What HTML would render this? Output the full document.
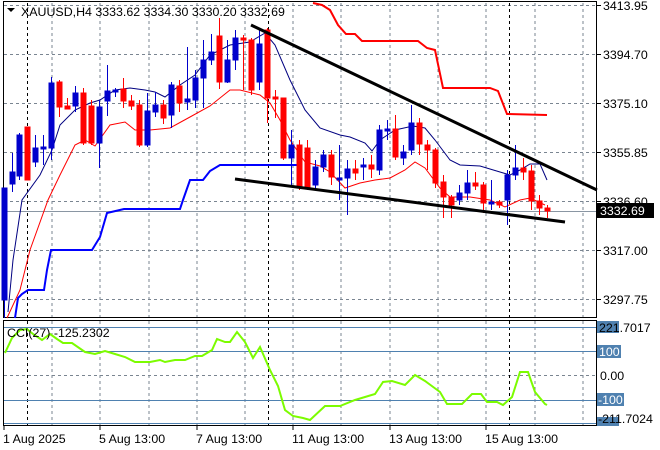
<!DOCTYPE html>
<html><head><style>
body{margin:0;background:#fff;width:660px;height:450px;overflow:hidden}
svg{display:block}
text{font-family:"Liberation Sans",sans-serif;font-size:12.4px;fill:#000}
</style></head><body>
<svg width="660" height="450" viewBox="0 0 660 450" xmlns="http://www.w3.org/2000/svg">
<rect width="660" height="450" fill="#fff"/>
<g stroke="#7a8591" stroke-width="1" stroke-dasharray="3,3" fill="none">
<path d="M52 3V317M100 3V317M149 3V317M197 3V317M245 3V317M293 3V317M341 3V317M390 3V317M438 3V317M486 3V317M535 3V317M583 3V317"/>
<path d="M52 321V425M100 321V425M149 321V425M197 321V425M245 321V425M293 321V425M341 321V425M390 321V425M438 321V425M486 321V425M535 321V425M583 321V425"/>
<path d="M4 5.5H597M4 54.5H597M4 103.5H597M4 152.5H597M4 201.5H597M4 250.5H597M4 299.5H597"/>
<path d="M4 375.5H597"/>
</g>
<g stroke="#000" stroke-dasharray="3,3"><path d="M27.5 3V317M268.5 3V317M509.5 3V317M27.5 321V425M268.5 321V425M509.5 321V425"/></g>
<path d="M4 211.5H597" stroke="#8a96a3"/>
<g stroke="#4f81b0"><path d="M4 327.5H597M4 351.5H597M4 400.5H597M4 423.5H597"/></g>
<rect x="3.5" y="1.5" width="593" height="316" fill="none" stroke="#000"/>
<rect x="3.5" y="320.5" width="593" height="105" fill="none" stroke="#000"/>
<polyline fill="none" stroke="#0000ff" stroke-width="2" points="15,318 18,298 22,294 28,290 44,290 47,270 51,250 92,250 100,237 107,213 124,209 180,209 183,200 190,180 203,180 210,171 220,165 300,165"/>
<polyline fill="none" stroke="#ff0000" stroke-width="2" points="313,3 322,5 330,10 338,25 346,34 355,34 362,41 418,41 427,48 435,50 443,88 490,88 498,91 507,114 547,115"/>
<polyline fill="none" stroke="#000080" stroke-width="1" points="8,312 13,260 22,200 40,175 52,150 60,125 75,110 90,103 100,100 115,90 130,88 145,90 155,92 165,97 180,85 195,75 210,55 230,45 250,42 265,33 275,45 290,80 305,110 320,128 340,135 350,137 365,143 372,151 380,140 395,130 413,126 425,128 435,140 450,160 460,165 480,166 500,172 510,175 520,170 530,164 540,164 547,180"/>
<polyline fill="none" stroke="#ff0000" stroke-width="1" points="7,318 20,290 30,250 48,200 60,175 75,145 85,140 95,146 110,125 125,122 135,130 150,130 170,128 190,117 210,106 230,90 240,90 260,95 270,103 280,120 290,140 305,162 320,166 330,172 345,188 360,183 375,180 390,178 405,170 415,162 425,168 440,188 450,197 470,197 490,200 505,207 520,200 530,198 545,205"/>
<g stroke-width="1">
<g stroke="#0000cc" fill="#0000cc">
<path d="M4.5 188V318M12.5 153V192M19.5 133V180M35.5 135V167M43.5 135V165M51.5 77V160M75.5 86V112M99.5 100V168M107.5 65V116M115.5 88V97M147.5 93V147M155.5 92V117M171.5 82V128M187.5 47V110M195.5 70V108M203.5 40V108M211.5 34V65M227.5 40V83M235.5 30V70M259.5 30V90M291.5 130V185M315.5 160V190M323.5 150V172M339.5 145V200M347.5 160V215M363.5 158V180M379.5 125V175M387.5 120V140M403.5 145V165M411.5 105V155M459.5 185V205M467.5 170V200M491.5 180V210M507.5 170V225M515.5 145V180"/>
<rect x="2" y="188" width="5" height="112"/><rect x="10" y="172" width="5" height="12"/><rect x="17" y="135" width="5" height="41"/><rect x="33" y="148" width="5" height="14"/><rect x="41" y="147" width="5" height="2"/><rect x="49" y="83" width="5" height="65"/><rect x="73" y="93" width="5" height="13"/><rect x="97" y="107" width="5" height="36"/><rect x="105" y="91" width="5" height="10"/><rect x="113" y="90" width="5" height="2"/><rect x="145" y="111" width="5" height="34"/><rect x="153" y="105" width="5" height="7"/><rect x="169" y="85" width="5" height="30"/><rect x="185" y="99" width="5" height="3"/><rect x="193" y="78" width="5" height="22"/><rect x="201" y="60" width="5" height="18"/><rect x="209" y="52" width="5" height="8"/><rect x="225" y="60" width="5" height="22"/><rect x="233" y="38" width="5" height="22"/><rect x="257" y="44" width="5" height="38"/><rect x="289" y="145" width="5" height="13"/><rect x="313" y="167" width="5" height="18"/><rect x="321" y="155" width="5" height="12"/><rect x="337" y="178" width="5" height="2"/><rect x="345" y="169" width="5" height="9"/><rect x="361" y="165" width="5" height="2"/><rect x="377" y="130" width="5" height="40"/><rect x="385" y="129" width="5" height="2"/><rect x="401" y="152" width="5" height="6"/><rect x="409" y="123" width="5" height="27"/><rect x="457" y="193" width="5" height="7"/><rect x="465" y="183" width="5" height="10"/><rect x="489" y="202" width="5" height="2"/><rect x="505" y="175" width="5" height="25"/><rect x="513" y="168" width="5" height="7"/>
</g>
<g stroke="#ff0000" fill="#ff0000">
<path d="M27.5 127V180M59.5 80V117M67.5 98V109M83.5 88V145M91.5 100V145M123.5 78V108M131.5 95V110M139.5 100V147M163.5 100V124M179.5 80V112M219.5 18V89M243.5 35V90M251.5 38V95M267.5 28V123M275.5 90V118M283.5 98V160M299.5 140V190M307.5 140V190M331.5 150V185M355.5 160V180M371.5 155V178M395.5 115V160M419.5 118V155M427.5 140V170M435.5 148V188M443.5 175V218M451.5 195V218M475.5 172V190M483.5 182V213M499.5 200V208M523.5 158V180M531.5 165V210M539.5 195V215M547.5 205V218"/>
<rect x="25" y="127" width="5" height="53"/><rect x="57" y="82" width="5" height="25"/><rect x="65" y="106" width="5" height="3"/><rect x="81" y="93" width="5" height="50"/><rect x="89" y="106" width="5" height="37"/><rect x="121" y="89" width="5" height="12"/><rect x="129" y="101" width="5" height="5"/><rect x="137" y="105" width="5" height="40"/><rect x="161" y="105" width="5" height="13"/><rect x="177" y="86" width="5" height="17"/><rect x="217" y="36" width="5" height="46"/><rect x="241" y="38" width="5" height="2"/><rect x="249" y="40" width="5" height="50"/><rect x="265" y="30" width="5" height="68"/><rect x="273" y="97" width="5" height="2"/><rect x="281" y="98" width="5" height="60"/><rect x="297" y="145" width="5" height="43"/><rect x="305" y="148" width="5" height="40"/><rect x="329" y="155" width="5" height="22"/><rect x="353" y="169" width="5" height="4"/><rect x="369" y="165" width="5" height="4"/><rect x="393" y="129" width="5" height="28"/><rect x="417" y="123" width="5" height="21"/><rect x="425" y="145" width="5" height="5"/><rect x="433" y="150" width="5" height="33"/><rect x="441" y="182" width="5" height="15"/><rect x="449" y="197" width="5" height="8"/><rect x="473" y="183" width="5" height="3"/><rect x="481" y="185" width="5" height="18"/><rect x="497" y="202" width="5" height="3"/><rect x="521" y="168" width="5" height="4"/><rect x="529" y="171" width="5" height="30"/><rect x="537" y="201" width="5" height="7"/><rect x="545" y="208" width="5" height="3"/>
</g>
</g>
<path d="M251 25L597 190M235 179L565 222" stroke="#000" stroke-width="3"/>
<polyline fill="none" stroke="#7cfc00" stroke-width="2" points="5,353 12,338 20,330 27,329 33,334 42,340 50,334 57,339 63,343 72,343 85,352 95,354 105,351 115,354 125,357 135,362 150,362 160,360 165,362 175,360 185,360 195,356 202,356 212,350 217,339 225,342 230,342 237,332 245,342 253,358 260,347 270,370 278,386 285,410 293,416 303,418 310,420 325,406 340,406 355,400 365,397 375,394 383,382 392,381 405,385 415,375 425,381 440,392 447,404 462,404 472,394 481,394 487,402 497,402 503,405 512,397 520,372 528,372 535,392 545,404 547,405"/>
<path d="M7 8H15L11 12Z" fill="#000"/>
<text x="21" y="16">XAUUSD,H4  3333.62 3334.30 3330.20 3332.69</text>
<text x="7" y="337">CCI(27) -125.2302</text>
<g stroke="#000"><path d="M597 5.5h4M597 54.5h4M597 103.5h4M597 152.5h4M597 201.5h4M597 250.5h4M597 299.5h4"/></g>
<text x="603" y="10">3413.95</text>
<text x="603" y="59">3394.70</text>
<text x="603" y="108">3375.10</text>
<text x="603" y="157">3355.85</text>
<text x="603" y="206">3336.60</text>
<rect x="597" y="203" width="57" height="15" fill="#000"/>
<text x="600" y="215" style="fill:#fff">3332.69</text>
<text x="603" y="255">3317.00</text>
<text x="603" y="304">3297.75</text>
<rect x="597" y="321" width="22" height="12" fill="#4f81b0"/>
<text x="599" y="332">221.7017</text>
<rect x="597" y="345" width="24" height="13" fill="#4f81b0"/>
<text x="599" y="356" style="fill:#fff">100</text>
<text x="600" y="380">0.00</text>
<rect x="597" y="393" width="27" height="13" fill="#4f81b0"/>
<text x="598" y="404" style="fill:#fff">-100</text>
<rect x="597" y="417" width="22" height="9" fill="#4f81b0"/>
<text x="598" y="423">-211.7024</text>
<g stroke="#000"><path d="M4 426v4M100 426v4M197 426v4M293 426v4M390 426v4M486 426v4"/></g>
<text x="3" y="443">1 Aug 2025</text>
<text x="99" y="443">5 Aug 13:00</text>
<text x="196" y="443">7 Aug 13:00</text>
<text x="292" y="443">11 Aug 13:00</text>
<text x="389" y="443">13 Aug 13:00</text>
<text x="485" y="443">15 Aug 13:00</text>
</svg>
</body></html>
